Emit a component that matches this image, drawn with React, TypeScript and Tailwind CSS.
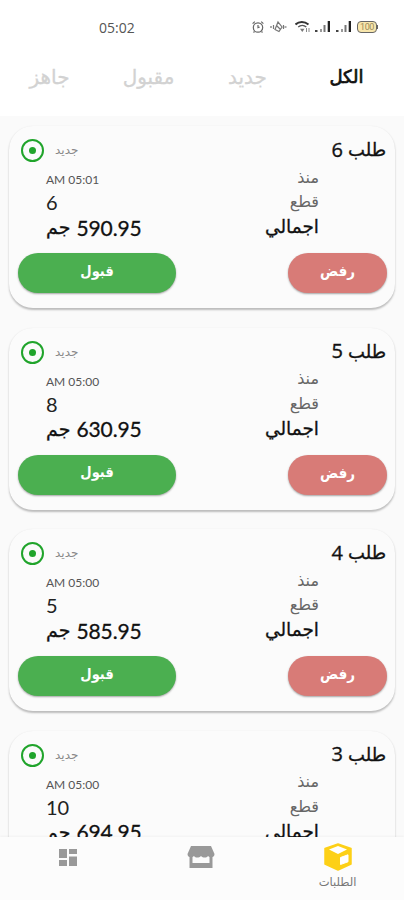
import clsx from "clsx";

interface Order {
  id: number;
  time: string;
  pieces: number;
  total: string;
}

const orders: Order[] = [
  { id: 6, time: "05:01", pieces: 6, total: "590.95" },
  { id: 5, time: "05:00", pieces: 8, total: "630.95" },
  { id: 4, time: "05:00", pieces: 5, total: "585.95" },
  { id: 3, time: "05:00", pieces: 10, total: "694.95" },
];

const tabs = ["الكل", "جديد", "مقبول", "جاهز"];

const SignalIcon = () => (
  <svg width="16" height="12" viewBox="0 0 16 12" className="shrink-0">
    <path d="M0 9h2.5v2H0z" fill="#444" />
    <path d="M5 8h2v3H5z" fill="#999" />
    <path d="M8.5 4h2v7h-2z" fill="#777" />
    <path d="M12.7 0h2.3v11h-2.3z" fill="#222" />
  </svg>
);

const StatusBar = () => (
  <div dir="ltr" className="flex h-[54px] shrink-0 items-center pl-[99px]">
    <span className="w-[152px] font-['Open_Sans'] text-[14px] leading-[19px] text-[#555]">
      05:02
    </span>
    <div className="flex h-[15px] items-center">
      {/* Alarm */}
      <svg width="14" height="14" viewBox="0 0 14 14" fill="none" stroke="#666" strokeWidth="1.2">
        <circle cx="7" cy="7.5" r="4.7" />
        <path d="M7 5v2.7l1.7-.7M1.6 3.6l2.2-2M12.4 3.6l-2.2-2M3.5 11.5l-1 1M10.5 11.5l1 1" />
      </svg>
      {/* Vibrate */}
      <svg width="18" height="14" viewBox="0 0 18 14" fill="none" stroke="#777" strokeWidth="1.2" className="ml-[4px]">
        <path d="M6 9.5 9 2l4 5-3 4.5zM8 6l3 3M4.5 5v4M14.5 5v4" />
        <path d="M1 7h2M15.5 7h2" stroke="#555" />
      </svg>
      {/* Wifi */}
      <svg width="16" height="14" viewBox="0 0 16 14" fill="none" className="ml-[8px]">
        <path d="M.5 4.5C4 1.3 9.5 1.3 13.5 4.5" stroke="#333" strokeWidth="2" />
        <path d="M3.2 7C5.5 5 9 5 11.3 7" stroke="#555" strokeWidth="1.3" />
        <path d="M5 8.7h4.5L7.3 12z" fill="#777" />
        <path d="M11.5 8v4M14 8v4" stroke="#888" />
      </svg>
      <div className="ml-[4px] flex gap-[5px]">
        <SignalIcon />
        <SignalIcon />
      </div>
      {/* Battery */}
      <div className="relative ml-[5px] flex h-[12px] w-[20px] items-center justify-center rounded-[4px] border border-[#666] bg-[#f8e6ac]">
        <span className="font-['Roboto'] text-[9px] leading-none tracking-tighter text-[#9b8b5a]">100</span>
        <span className="absolute -right-[2px] top-[3px] h-[4px] w-px bg-[#666]" />
      </div>
    </div>
  </div>
);

const OrderCard = ({ order }: { order: Order }) => (
  <div className="h-[182px] shrink-0 rounded-[24px] bg-[#fbfbfb] pl-[9px] pr-[8px] pt-[10px] shadow-[0_1.5px_2px_rgba(0,0,0,0.25)]">
    <div className="flex h-[28px] items-center justify-between pl-[3px] pr-px">
      <h2 className="flex items-center gap-[5px] text-[18px] leading-[28px] text-[#111] [-webkit-text-stroke:0.35px_#111]">
        <span className="-mt-[2px]">طلب</span>
        <span className="-mt-px font-['Open_Sans'] text-[20px] font-medium">{order.id}</span>
      </h2>
      <div className="flex items-center gap-[11px]">
        <span className="font-['DejaVu_Sans'] text-[12px] text-[#888]">جديد</span>
        <span className="mt-px flex h-[23px] w-[23px] items-center justify-center rounded-full border-2 border-[#20a42b]">
          <span className="h-[7px] w-[7px] rounded-full bg-[#20a42b]" />
        </span>
      </div>
    </div>

    <div className="pl-[28px] pr-[68px]">
      <div className="flex h-[29px] items-center justify-between">
        <span className="-mt-[4px] text-[16px] text-[#666]">منذ</span>
        <span dir="ltr" className="mt-[3px] text-[12px] text-[#555]">AM {order.time}</span>
      </div>
      <div className="flex h-[21px] items-center justify-between">
        <span className="-mt-[5px] text-[16px] text-[#666]">قطع</span>
        <span className="-mt-[3px] text-[20px] text-[#222]">{order.pieces}</span>
      </div>
      <div className="flex h-[29px] items-center justify-between text-[#111] [-webkit-text-stroke:0.3px_#111]">
        <span className="-mt-[3px] text-[18.5px]">اجمالي</span>
        <span className="-mt-[2px] flex items-center gap-[6px]">
          <span className="text-[21px] tracking-[-0.1px]">{order.total}</span>
          <span className="text-[19px]">جم</span>
        </span>
      </div>
    </div>

    <div className="mt-[10px] flex justify-between font-['DejaVu_Sans_Condensed','DejaVu_Sans',sans-serif] font-bold text-white">
      <button className="h-[40px] w-[99px] rounded-full bg-[#d87b77] pb-[3px] text-[15px] shadow-[0_1px_2px_rgba(0,0,0,0.35)]">
        رفض
      </button>
      <button className="h-[40px] w-[158px] rounded-full bg-[#4baf50] pb-[3px] text-[14.5px] shadow-[0_1px_2px_rgba(0,0,0,0.35)]">
        قبول
      </button>
    </div>
  </div>
);

const BottomNav = () => (
  <nav className="flex h-[63px] shrink-0 bg-[#fcfcfc] text-[#999] shadow-[0_-1px_2px_rgba(0,0,0,0.04)]">
    <div className="flex w-[133px] flex-col items-center pt-[5px]">
      <svg width="30" height="30" viewBox="0 0 30 30">
        <path
          d="M15 2 28 6.500v15.500L15 28 2 22V6.500z"
          fill="#fdd017"
          stroke="#fdd017"
          strokeWidth="1.5"
          strokeLinejoin="round"
        />
        <path d="M15 4 24 7.500 15 12 6 7.500z" fill="#fff" />
        <path d="M17.500 15.500 25 12.800v7L17.500 22.500z" fill="#fff" stroke="#fff" strokeLinejoin="round" />
      </svg>
      <span className="mt-[2px] text-[11.5px] leading-[16px] text-[#777]">الطلبات</span>
    </div>
    <div className="flex flex-1 justify-center pl-[0px] pr-[3px] pt-[8px]">
      <svg width="28" height="24" viewBox="0 0 28 24" fill="currentColor" className="mr-[2px]">
        <path d="M4 1h20l3.5 8c0 4-4.500 4-6.500 2-1.500 2-5 2-7 0-2 2-5.500 2-7 0-2 2-6.500 2-6.500-2z" />
        <path d="M2.5 9h3v9h17V9h3v14h-23z" />
      </svg>
    </div>
    <div className="flex w-[135px] justify-center pt-[12px]">
      <svg width="18" height="18" viewBox="0 0 18 18" fill="currentColor">
        <path d="M0 0h8v9H0zM10 0h8v5h-8zM0 11h8v6H0zM10 7.500h8V17h-8z" />
      </svg>
    </div>
  </nav>
);

const App = () => {
  return (
    <div
      dir="rtl"
      className="flex h-[900px] w-[404px] flex-col overflow-hidden bg-[#fafafa] font-['Lato','DejaVu_Sans',sans-serif]"
    >
      <header className="shrink-0 bg-white">
        <StatusBar />
        <div className="flex h-[62px] pr-[8px] font-['DejaVu_Sans',sans-serif]">
          {tabs.map((label, index) => (
            <button
              key={label}
              className={clsx(
                "flex w-[99px] justify-center pt-[9px] leading-[28px]",
                index === 0
                  ? "text-[18px] text-[#111] [-webkit-text-stroke:0.7px_#111]"
                  : "text-[20px] text-[#d2d2d2] [-webkit-text-stroke:0.3px_#d2d2d2]"
              )}
            >
              {label}
            </button>
          ))}
        </div>
      </header>

      <main className="flex min-h-0 flex-1 flex-col gap-[19.5px] overflow-hidden px-[9px] pt-[10px]">
        {orders.map((order) => (
          <OrderCard key={order.id} order={order} />
        ))}
      </main>

      <BottomNav />
    </div>
  );
};

export default App;
